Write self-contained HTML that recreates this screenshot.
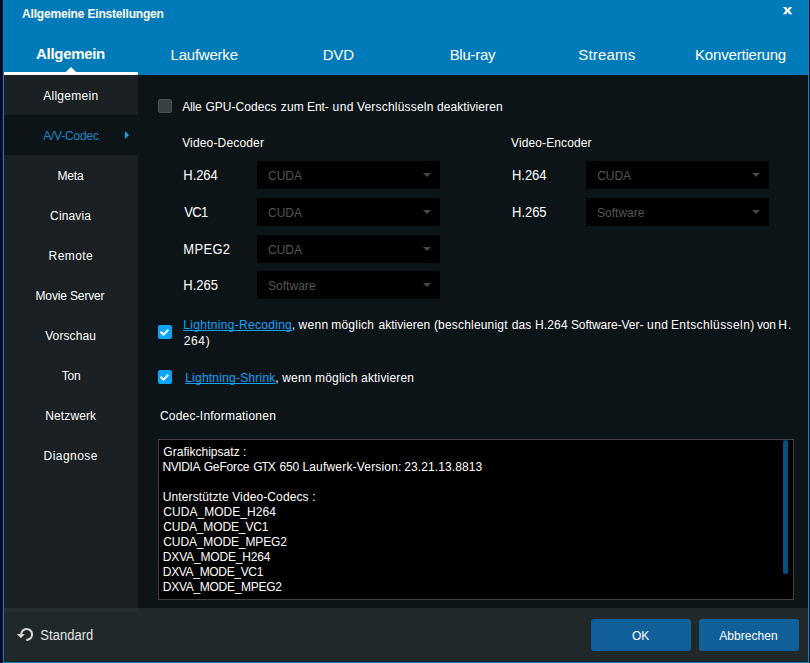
<!DOCTYPE html>
<html>
<head>
<meta charset="utf-8">
<title>Allgemeine Einstellungen</title>
<style>
html,body{margin:0;padding:0;}
body{width:810px;height:663px;overflow:hidden;background:#030a26;font-family:"Liberation Sans",sans-serif;position:relative;}
.abs{position:absolute;}
#win{position:absolute;left:3px;top:0;width:806px;height:663px;background:#0d1417;overflow:hidden;}
#hdr{position:absolute;left:0;top:0;width:806px;height:75px;background:#007ab8;}
#uline{position:absolute;left:1px;top:72px;width:134px;height:3px;background:#fff;}
#side{position:absolute;left:1px;top:75px;width:134px;height:533px;background:#1a2023;}
#selrow{position:absolute;left:1px;top:115px;width:134px;height:40px;background:#0d1417;}
#sep{position:absolute;left:1px;top:608px;width:134px;height:4px;background:#262e31;}
#foot{position:absolute;left:1px;top:608px;width:804px;height:54px;background:#20282a;}
.btn{position:absolute;top:619px;height:32px;width:100px;border-radius:3px;background:#105f99;}
.x{position:absolute;white-space:nowrap;}
.sb{position:absolute;height:28px;width:183px;background:#000;}
.sb i{position:absolute;right:9px;top:12px;width:0;height:0;border-left:4px solid transparent;border-right:4px solid transparent;border-top:4px solid #484848;}
.cb{position:absolute;width:14px;height:14px;background:#1a9ff0;border-radius:2px;}
.lnk{color:#10a3f8;text-decoration:underline;text-decoration-skip-ink:none;text-underline-offset:1px;}
#frame{position:absolute;left:0;top:0;width:806px;height:663px;box-sizing:border-box;border-left:1px solid #0a84c6;border-right:1px solid #0a84c6;border-bottom:1px solid #0a84c6;}
</style>
</head>
<body>
<div id="win">
  <div id="hdr"></div>
  <svg class="abs" style="left:775px;top:0px;" width="24" height="24" viewBox="0 0 24 24"><polygon points="5.00,7.00 8.10,7.00 9.65,9.20 11.20,7.00 14.30,7.00 11.50,10.60 14.30,14.20 11.20,14.20 9.65,12.00 8.10,14.20 5.00,14.20 7.80,10.60" fill="#fff"/></svg>
  <svg class="abs" style="left:61px;top:66px;" width="14" height="6" viewBox="0 0 14 6"><path d="M1.8 6 L7 0.9 L12.2 6 Z" fill="#fff"/></svg>
  <div id="uline"></div>
  <div id="side"></div>
  <div id="selrow"></div>
  <div class="abs" style="left:122px;top:131px;width:0;height:0;border-top:4px solid transparent;border-bottom:4px solid transparent;border-left:4px solid #12a2f0;"></div>

  <div class="abs" style="left:155px;top:99px;width:14px;height:14px;background:#3a4144;border:1px solid #485053;box-sizing:border-box;border-radius:2px;"></div>

  <div class="sb" style="left:254px;top:161px;"><i></i></div>
  <div class="sb" style="left:254px;top:198px;"><i></i></div>
  <div class="sb" style="left:254px;top:235px;"><i></i></div>
  <div class="sb" style="left:254px;top:271px;"><i></i></div>
  <div class="sb" style="left:583px;top:161px;"><i></i></div>
  <div class="sb" style="left:583px;top:198px;"><i></i></div>

  <svg class="abs" style="left:155px;top:325px;" width="14" height="14" viewBox="0 0 14 14"><rect x="0" y="0" width="14" height="14" rx="2" ry="2" fill="#0ca4fd"/><polygon points="1.9,7.5 3.2,6.0 5.5,8.3 9.6,3.9 11.0,5.4 5.5,10.9" fill="#fff"/></svg>
  <svg class="abs" style="left:155px;top:370px;" width="14" height="14" viewBox="0 0 14 14"><rect x="0" y="0" width="14" height="14" rx="2" ry="2" fill="#0ca4fd"/><polygon points="1.9,7.5 3.2,6.0 5.5,8.3 9.6,3.9 11.0,5.4 5.5,10.9" fill="#fff"/></svg>

  <div class="abs" id="info" style="left:155px;top:439px;width:636px;height:161px;background:#000;border:1px solid #454040;box-sizing:border-box;"></div>
  <div class="abs" style="left:780px;top:440px;width:5px;height:134px;background:#06507e;border-radius:2.5px;"></div>

  <div id="foot"></div>
  <div id="sep"></div>
  <div class="btn" style="left:588px;"></div>
  <div class="btn" style="left:696px;"></div>

  <svg class="abs" style="left:10px;top:620px;" width="30" height="30" viewBox="13 620 30 30"><path d="M 27.1 639.85 A 5.45 5.45 0 1 0 21.2 634.6" fill="none" stroke="#d6d6d6" stroke-width="2.1" stroke-linecap="round"/><polygon points="16.8,634.0 24.9,634.0 20.9,638.3" fill="#d6d6d6"/></svg>
<div class="x" id="title" style="left:19.06px;top:7.34px;font-size:12px;line-height:15px;letter-spacing:-0.181px;color:#fff;font-weight:bold;">Allgemeine Einstellungen</div>
<div class="x" id="tab0" style="left:33.08px;top:44.3px;font-size:15px;line-height:19px;letter-spacing:-0.312px;color:#fff;font-weight:bold;">Allgemein</div>
<div class="x" id="tab1" style="left:167.55px;top:45.3px;font-size:15px;line-height:19px;letter-spacing:-0.223px;color:#fff;">Laufwerke</div>
<div class="x" id="tab2" style="left:319.65px;top:45.3px;font-size:15px;line-height:19px;letter-spacing:-0.15px;color:#fff;">DVD</div>
<div class="x" id="tab3" style="left:446.65px;top:45.3px;font-size:15px;line-height:19px;letter-spacing:-0.282px;color:#fff;">Blu-ray</div>
<div class="x" id="tab4" style="left:575.27px;top:45.3px;font-size:15px;line-height:19px;letter-spacing:0.18px;color:#fff;">Streams</div>
<div class="x" id="tab5" style="left:692.05px;top:45.3px;font-size:15px;line-height:19px;letter-spacing:-0.188px;color:#fff;">Konvertierung</div>
<div class="x" id="s0" style="left:40.15px;top:89.34px;font-size:12px;line-height:15px;letter-spacing:0.291px;color:#fff;">Allgemein</div>
<div class="x" id="s1" style="left:40.15px;top:129.34px;font-size:12px;line-height:15px;letter-spacing:-0.178px;color:#1b86c6;">A/V-Codec</div>
<div class="x" id="s2" style="left:54.51px;top:169.34px;font-size:12px;line-height:15px;letter-spacing:-0.201px;color:#fff;">Meta</div>
<div class="x" id="s3" style="left:47.12px;top:209.34px;font-size:12px;line-height:15px;letter-spacing:0.12px;color:#fff;">Cinavia</div>
<div class="x" id="s4" style="left:45.61px;top:249.34px;font-size:12px;line-height:15px;letter-spacing:0.398px;color:#fff;">Remote</div>
<div class="x" id="s5" style="left:32.51px;top:289.34px;font-size:12px;line-height:15px;letter-spacing:-0.143px;color:#fff;">Movie Server</div>
<div class="x" id="s6" style="left:42.14px;top:329.34px;font-size:12px;line-height:15px;letter-spacing:0.122px;color:#fff;">Vorschau</div>
<div class="x" id="s7" style="left:58.63px;top:369.34px;font-size:12px;line-height:15px;letter-spacing:-0.127px;color:#fff;">Ton</div>
<div class="x" id="s8" style="left:42.31px;top:409.34px;font-size:12px;line-height:15px;letter-spacing:0.109px;color:#fff;">Netzwerk</div>
<div class="x" id="s9" style="left:40.61px;top:449.34px;font-size:12px;line-height:15px;letter-spacing:0.441px;color:#fff;">Diagnose</div>
<div class="x" id="gpu0" style="left:179.25px;top:100.34px;font-size:12px;line-height:15px;letter-spacing:-0.182px;color:#fff;">Alle</div>
<div class="x" id="gpu1" style="left:202.4px;top:100.34px;font-size:12px;line-height:15px;letter-spacing:0.055px;color:#fff;">GPU-Codecs</div>
<div class="x" id="gpu2" style="left:277.63px;top:100.34px;font-size:12px;line-height:15px;letter-spacing:0.272px;color:#fff;">zum</div>
<div class="x" id="gpu3" style="left:303.91px;top:100.34px;font-size:12px;line-height:15px;letter-spacing:-0.026px;color:#fff;">Ent-</div>
<div class="x" id="gpu4" style="left:329.48px;top:100.34px;font-size:12px;line-height:15px;letter-spacing:0.502px;color:#fff;">und</div>
<div class="x" id="gpu5" style="left:353.94px;top:100.34px;font-size:12px;line-height:15px;letter-spacing:0.195px;color:#fff;">Verschlüsseln</div>
<div class="x" id="gpu6" style="left:433.89px;top:100.34px;font-size:12px;line-height:15px;letter-spacing:0.098px;color:#fff;">deaktivieren</div>
<div class="x" id="vdec" style="left:179.14px;top:136.34px;font-size:12px;line-height:15px;letter-spacing:0.167px;color:#fff;">Video-Decoder</div>
<div class="x" id="venc" style="left:508.04px;top:136.34px;font-size:12px;line-height:15px;letter-spacing:0.118px;color:#fff;">Video-Encoder</div>
<div class="x" id="d0" style="left:180.37px;top:167.5px;font-size:13px;line-height:16px;letter-spacing:-0.093px;color:#fff;transform:scaleY(1.07);transform-origin:0 12.50px;">H.264</div>
<div class="x" id="d1" style="left:181.22px;top:204.5px;font-size:13px;line-height:16px;letter-spacing:-0.668px;color:#fff;transform:scaleY(1.07);transform-origin:0 12.50px;">VC1</div>
<div class="x" id="d2" style="left:180.37px;top:241.5px;font-size:13px;line-height:16px;letter-spacing:0.288px;color:#fff;transform:scaleY(1.07);transform-origin:0 12.50px;">MPEG2</div>
<div class="x" id="d3" style="left:180.37px;top:277.5px;font-size:13px;line-height:16px;letter-spacing:-0.045px;color:#fff;transform:scaleY(1.07);transform-origin:0 12.50px;">H.265</div>
<div class="x" id="e0" style="left:509.07000000000005px;top:167.5px;font-size:13px;line-height:16px;letter-spacing:-0.093px;color:#fff;transform:scaleY(1.07);transform-origin:0 12.50px;">H.264</div>
<div class="x" id="e1" style="left:509.07000000000005px;top:204.5px;font-size:13px;line-height:16px;letter-spacing:-0.045px;color:#fff;transform:scaleY(1.07);transform-origin:0 12.50px;">H.265</div>
<div class="x" id="dv0" style="left:265.12px;top:169.34px;font-size:12px;line-height:15px;letter-spacing:-0.039px;color:#555;">CUDA</div>
<div class="x" id="dv1" style="left:265.12px;top:206.34px;font-size:12px;line-height:15px;letter-spacing:-0.039px;color:#555;">CUDA</div>
<div class="x" id="dv2" style="left:265.12px;top:243.34px;font-size:12px;line-height:15px;letter-spacing:-0.039px;color:#555;">CUDA</div>
<div class="x" id="dv3" style="left:264.95px;top:279.34px;font-size:12px;line-height:15px;letter-spacing:0.038px;color:#555;">Software</div>
<div class="x" id="ev0" style="left:594.22px;top:169.34px;font-size:12px;line-height:15px;letter-spacing:-0.072px;color:#555;">CUDA</div>
<div class="x" id="ev1" style="left:594.05px;top:206.34px;font-size:12px;line-height:15px;letter-spacing:0.009px;color:#555;">Software</div>
<div class="x" id="lr1a" style="left:180.31px;top:318.34px;font-size:12px;line-height:15px;letter-spacing:0.299px;color:#10a3f8;"><span class="lnk">Lightning-Recoding</span></div>
<div class="x" id="lr1b0" style="left:288.71px;top:318.34px;font-size:12px;line-height:15px;letter-spacing:0px;color:#fff;">,</div>
<div class="x" id="lr1b1" style="left:295.58px;top:318.34px;font-size:12px;line-height:15px;letter-spacing:0.264px;color:#fff;">wenn</div>
<div class="x" id="lr1b2" style="left:328.26px;top:318.34px;font-size:12px;line-height:15px;letter-spacing:0.219px;color:#fff;">möglich</div>
<div class="x" id="lr1b3" style="left:375.46px;top:318.34px;font-size:12px;line-height:15px;letter-spacing:0.045px;color:#fff;">aktivieren</div>
<div class="x" id="lr1b4" style="left:430.88px;top:318.34px;font-size:12px;line-height:15px;letter-spacing:0.189px;color:#fff;">(beschleunigt</div>
<div class="x" id="lr1b5" style="left:508.79px;top:318.34px;font-size:12px;line-height:15px;letter-spacing:0.013px;color:#fff;">das</div>
<div class="x" id="lr1b6" style="left:531.91px;top:318.34px;font-size:12px;line-height:15px;letter-spacing:0.175px;color:#fff;">H.264</div>
<div class="x" id="lr1b7" style="left:567.95px;top:318.34px;font-size:12px;line-height:15px;letter-spacing:-0.076px;color:#fff;">Software-Ver-</div>
<div class="x" id="lr1b8" style="left:644.08px;top:318.34px;font-size:12px;line-height:15px;letter-spacing:0.402px;color:#fff;">und</div>
<div class="x" id="lr1b9" style="left:667.91px;top:318.34px;font-size:12px;line-height:15px;letter-spacing:0.409px;color:#fff;">Entschlüsseln)</div>
<div class="x" id="lr1b10" style="left:753.95px;top:318.34px;font-size:12px;line-height:15px;letter-spacing:-0.187px;color:#fff;">von</div>
<div class="x" id="lr1b11" style="left:775.31px;top:318.34px;font-size:12px;line-height:15px;letter-spacing:0.947px;color:#fff;">H.</div>
<div class="x" id="lr2" style="left:180.82px;top:334.34px;font-size:12px;line-height:15px;letter-spacing:0.6px;color:#fff;">264)</div>
<div class="x" id="lsa" style="left:182.21px;top:371.34px;font-size:12px;line-height:15px;letter-spacing:0.228px;color:#10a3f8;"><span class="lnk">Lightning-Shrink</span></div>
<div class="x" id="lsb" style="left:272.31px;top:371.34px;font-size:12px;line-height:15px;letter-spacing:0.161px;color:#fff;">, wenn möglich aktivieren</div>
<div class="x" id="ci" style="left:156.92px;top:409.34px;font-size:12px;line-height:15px;letter-spacing:0.214px;color:#fff;">Codec-Informationen</div>
<div class="x" id="i0" style="left:160.3px;top:445.34px;font-size:12px;line-height:15px;letter-spacing:0.025px;color:#fff;">Grafikchipsatz :</div>
<div class="x" id="i1" style="left:159.75px;top:490.34px;font-size:12px;line-height:15px;letter-spacing:0.11px;color:#fff;">Unterstützte Video-Codecs :</div>
<div class="x" id="i2" style="left:160.32px;top:505.34px;font-size:12px;line-height:15px;letter-spacing:0.038px;color:#fff;">CUDA_MODE_H264</div>
<div class="x" id="i3" style="left:160.32px;top:520.34px;font-size:12px;line-height:15px;letter-spacing:-0.125px;color:#fff;">CUDA_MODE_VC1</div>
<div class="x" id="i4" style="left:160.32px;top:535.34px;font-size:12px;line-height:15px;letter-spacing:-0.128px;color:#fff;">CUDA_MODE_MPEG2</div>
<div class="x" id="i5" style="left:159.81px;top:550.34px;font-size:12px;line-height:15px;letter-spacing:-0.162px;color:#fff;">DXVA_MODE_H264</div>
<div class="x" id="i6" style="left:159.81px;top:565.34px;font-size:12px;line-height:15px;letter-spacing:-0.324px;color:#fff;">DXVA_MODE_VC1</div>
<div class="x" id="i7" style="left:159.81px;top:580.34px;font-size:12px;line-height:15px;letter-spacing:-0.286px;color:#fff;">DXVA_MODE_MPEG2</div>
<div class="x" id="nv0" style="left:159.41px;top:460.34px;font-size:12px;line-height:15px;letter-spacing:-0.401px;color:#fff;">NVIDIA</div>
<div class="x" id="nv1" style="left:200.7px;top:460.34px;font-size:12px;line-height:15px;letter-spacing:-0.151px;color:#fff;">GeForce</div>
<div class="x" id="nv2" style="left:250.2px;top:460.34px;font-size:12px;line-height:15px;letter-spacing:-1.082px;color:#fff;">GTX</div>
<div class="x" id="nv3" style="left:276.4px;top:460.34px;font-size:12px;line-height:15px;letter-spacing:-0.132px;color:#fff;">650</div>
<div class="x" id="nv4" style="left:299.41px;top:460.34px;font-size:12px;line-height:15px;letter-spacing:0.184px;color:#fff;">Laufwerk-Version:</div>
<div class="x" id="nv5" style="left:401.22px;top:460.34px;font-size:12px;line-height:15px;letter-spacing:0.108px;color:#fff;">23.21.13.8813</div>
<div class="x" id="std" style="left:37.29px;top:627.5px;font-size:13px;line-height:16px;letter-spacing:0.033px;color:#e4e4e4;transform:scaleY(1.07);transform-origin:0 12.50px;">Standard</div>
<div class="x" id="ok" style="left:628.96px;top:629.34px;font-size:12px;line-height:15px;letter-spacing:-0.035px;color:#fff;">OK</div>
<div class="x" id="abb" style="left:716.15px;top:629.34px;font-size:12px;line-height:15px;letter-spacing:0.067px;color:#fff;">Abbrechen</div>
  <div class="abs" style="left:1px;top:612px;width:1px;height:50px;background:#1e2222;"></div>
  <div class="abs" style="left:1px;top:661px;width:804px;height:1px;background:#1e2222;"></div>
  <div id="frame"></div>
</div>
</body>
</html>
